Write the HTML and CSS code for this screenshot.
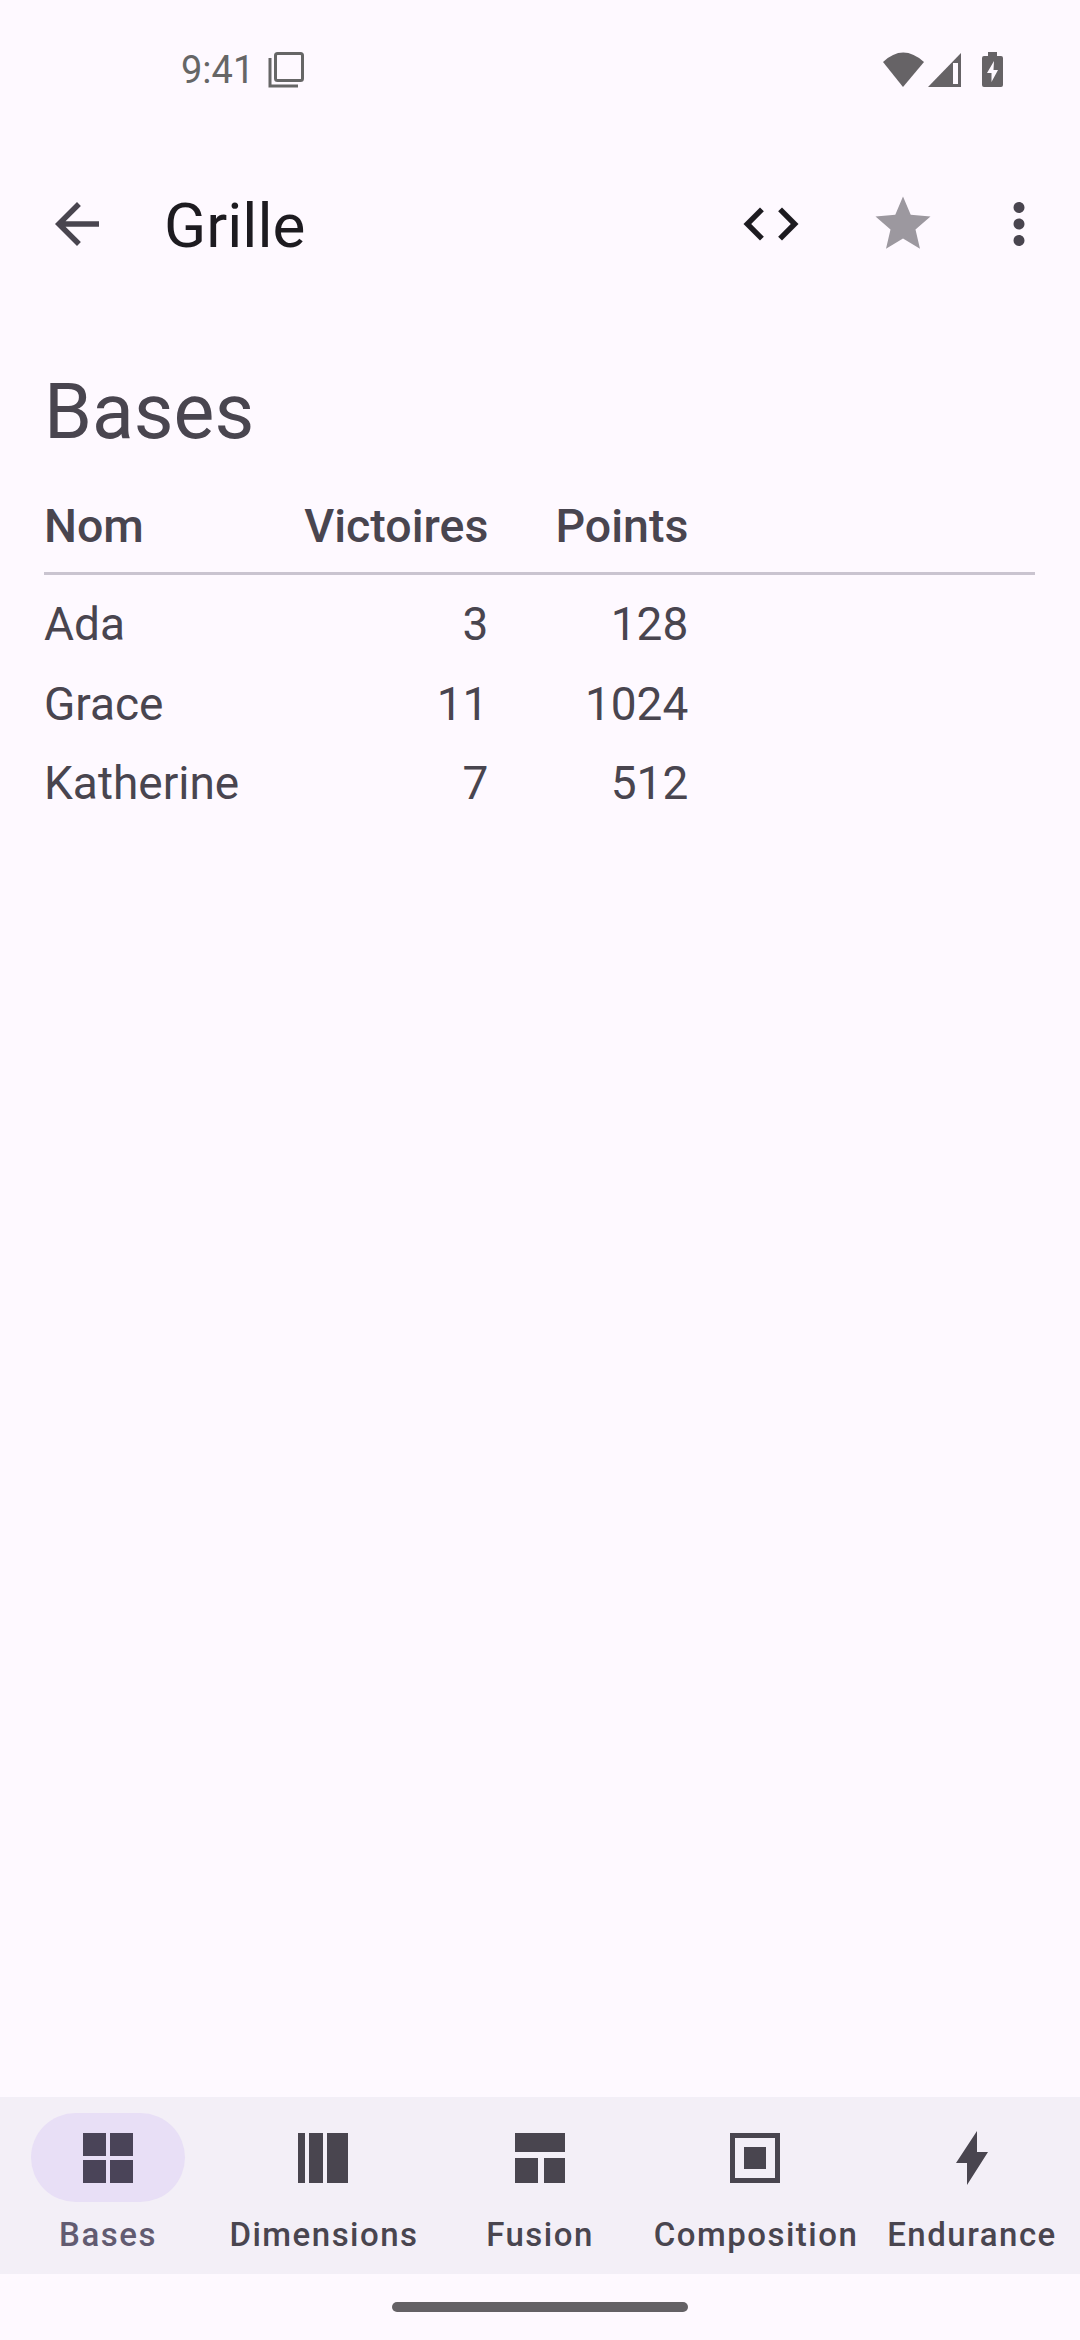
FILE: index.html
```html
<!DOCTYPE html>
<html lang="fr">
<head>
    <title>Grille</title>
    <link rel="stylesheet" href="styles.css">
</head>
<body>
    <div class="status-bar">
        <span class="clock">9:41</span>
        <svg class="copy-icon" width="36" height="36" viewBox="0 0 36 36">
            <rect x="7.5" y="1.5" width="27" height="27" rx="2" fill="none" stroke="#666" stroke-width="3"/>
            <path d="M2 6V34H30" fill="none" stroke="#666" stroke-width="3"/>
        </svg>
        <div class="status-icons">
            <svg width="41" height="36" viewBox="0 0 41 36">
                <path d="M0 10Q20 -9 41 10L20 35Z" fill="#666366"/>
            </svg>
            <svg width="34" height="36" viewBox="0 0 34 36">
                <path d="M33 1V35H0Z" fill="#666366"/>
                <rect x="25" y="11" width="5" height="21" fill="#fef9ff"/>
            </svg>
            <svg width="21" height="36" viewBox="0 0 21 36">
                <path d="M6 0H15V4H19Q21 4 21 6V33Q21 35 19 35H2Q0 35 0 33V6Q0 4 2 4H6Z" fill="#666366"/>
                <path d="M12 9L5 21H9.500V30L16 18H11.500Z" fill="#fef9ff"/>
            </svg>
        </div>
    </div>

    <header class="app-bar">
        <svg class="icon back" viewBox="0 0 24 24" fill="#49454f">
            <path d="M20 11H7.830l5.590-5.590L12 4l-8 8 8 8 1.410-1.410L7.830 13H20v-2z"/>
        </svg>
        <h1 class="title">Grille</h1>
        <svg class="icon code" viewBox="0 0 24 24" fill="#1d1b20">
            <path d="M9.400 16.600L4.800 12l4.600-4.600L8 6l-6 6 6 6 1.400-1.400zm5.200 0l4.600-4.600-4.600-4.600L16 6l6 6-6 6-1.400-1.400z"/>
        </svg>
        <svg class="icon star" viewBox="0 0 24 24" fill="#9c989f">
            <path d="M12 17.270L18.180 21l-1.640-7.030L22 9.240l-7.190-.610L12 2 9.190 8.630 2 9.240l5.460 4.730L5.820 21z"/>
        </svg>
        <svg class="icon more" viewBox="0 0 24 24" fill="#49454f">
            <path d="M12 8c1.100 0 2-.9 2-2s-.9-2-2-2-2 .9-2 2 .9 2 2 2zm0 2c-1.100 0-2 .9-2 2s.9 2 2 2 2-.9 2-2-.9-2-2-2zm0 6c-1.100 0-2 .9-2 2s.9 2 2 2 2-.9 2-2-.9-2-2-2z"/>
        </svg>
    </header>

    <main class="content">
        <h2 class="heading">Bases</h2>
        <table class="scores">
            <thead>
                <tr>
                    <th class="name">Nom</th>
                    <th class="num">Victoires</th>
                    <th class="num">Points</th>
                    <th class="filler"></th>
                </tr>
            </thead>
            <tbody>
                <tr class="first-row">
                    <td class="name">Ada</td>
                    <td class="num">3</td>
                    <td class="num">128</td>
                    <td class="filler"></td>
                </tr>
                <tr>
                    <td class="name">Grace</td>
                    <td class="num">11</td>
                    <td class="num">1024</td>
                    <td class="filler"></td>
                </tr>
                <tr>
                    <td class="name">Katherine</td>
                    <td class="num">7</td>
                    <td class="num">512</td>
                    <td class="filler"></td>
                </tr>
            </tbody>
        </table>
    </main>

    <nav class="bottom-nav">
        <div class="nav-item active">
            <div class="nav-pill">
                <svg class="nav-icon" viewBox="0 0 66 66">
                    <rect x="8" y="8" width="23" height="23"/>
                    <rect x="35" y="8" width="23" height="23"/>
                    <rect x="8" y="35" width="23" height="23"/>
                    <rect x="35" y="35" width="23" height="23"/>
                </svg>
            </div>
            <span class="nav-label">Bases</span>
        </div>
        <div class="nav-item">
            <div class="nav-pill">
                <svg class="nav-icon" viewBox="0 0 66 66">
                    <rect x="7" y="8" width="7" height="50"/>
                    <rect x="18" y="8" width="14" height="50"/>
                    <rect x="36" y="8" width="21" height="50"/>
                </svg>
            </div>
            <span class="nav-label">Dimensions</span>
        </div>
        <div class="nav-item">
            <div class="nav-pill">
                <svg class="nav-icon" viewBox="0 0 66 66">
                    <rect x="8" y="8" width="50" height="19"/>
                    <rect x="8" y="33" width="23" height="25"/>
                    <rect x="37" y="33" width="21" height="25"/>
                </svg>
            </div>
            <span class="nav-label">Fusion</span>
        </div>
        <div class="nav-item">
            <div class="nav-pill">
                <svg class="nav-icon" viewBox="0 0 66 66">
                    <path fill-rule="evenodd" d="M7 8H57V58H7ZM12 13V53H52V13Z"/>
                    <rect x="21" y="22" width="22" height="22"/>
                </svg>
            </div>
            <span class="nav-label">Composition</span>
        </div>
        <div class="nav-item">
            <div class="nav-pill">
                <svg class="nav-icon" viewBox="0 0 66 66">
                    <path d="M38 6V27H49L28 60V38H17Z"/>
                </svg>
            </div>
            <span class="nav-label">Endurance</span>
        </div>
    </nav>

    <div class="gesture-area">
        <div class="gesture-bar"></div>
    </div>
</body>
</html>
```

FILE: styles.css
```css
* {
    box-sizing: border-box;
}

html, body {
    margin: 0;
    height: 100%;
}

body {
    display: flex;
    flex-direction: column;
    height: 2340px;
    background-color: #fef9ff;
    color: #49454f;
    font-family: Roboto, "Liberation Sans", sans-serif;
}

.status-bar {
    display: flex;
    align-items: center;
    height: 140px;
    padding: 0 77px 0 181px;
    color: #666;
}

.clock {
    font-size: 38px;
    line-height: 42px;
}

.copy-icon {
    margin-left: 14px;
}

.status-icons {
    display: flex;
    align-items: center;
    gap: 4px;
    margin-left: auto;
}

.status-icons svg:last-child {
    margin-left: 16px;
}

.app-bar {
    display: flex;
    align-items: center;
    height: 168px;
    padding-left: 44px;
}

.icon {
    flex: none;
    width: 66px;
    height: 66px;
}

.title {
    flex: 1;
    margin: 4px 0 0 54px;
    color: #1d1b20;
    font-size: 62px;
    font-weight: 400;
    line-height: 70px;
}

.star {
    margin-left: 66px;
}

.more {
    margin-left: 50px;
    margin-right: 28px;
}

.content {
    flex: 1;
    padding: 60px 45px 0 44px;
}

.heading {
    margin: 0 0 44px;
    font-size: 77px;
    font-weight: 400;
    line-height: 88px;
}

.scores {
    width: 100%;
    border-collapse: collapse;
    font-size: 46px;
}

.scores th {
    padding: 0 0 19px;
    border-bottom: 3px solid #cac4d0;
    font-size: 46.500px;
    font-weight: 500;
    line-height: 53px;
}

.scores td {
    padding: 0;
    line-height: 79.500px;
}

.first-row td {
    padding-top: 10px;
}

.name {
    text-align: left;
}

.num {
    padding-left: 65px !important;
    text-align: right;
}

.num + .num {
    padding-left: 67px !important;
}

.filler {
    width: 100%;
}

.bottom-nav {
    display: grid;
    grid-template-columns: repeat(5, 1fr);
    height: 177px;
    padding-top: 16px;
    background-color: #f3eff7;
}

.nav-item {
    display: flex;
    flex-direction: column;
    align-items: center;
    min-width: 0;
}

.nav-pill {
    display: flex;
    align-items: center;
    justify-content: center;
    width: 154px;
    height: 89px;
    border-radius: 45px;
}

.active .nav-pill {
    background-color: #e8dff6;
}

.nav-icon {
    width: 66px;
    height: 66px;
    fill: #49454f;
}

.active .nav-icon {
    fill: #4a4458;
}

.nav-label {
    margin-top: 13px;
    font-size: 33px;
    font-weight: 500;
    letter-spacing: 1.500px;
    line-height: 40px;
    white-space: nowrap;
}

.active .nav-label {
    color: #625b71;
}

.gesture-area {
    display: flex;
    justify-content: center;
    height: 66px;
    padding-top: 28px;
}

.gesture-bar {
    width: 296px;
    height: 10px;
    border-radius: 5px;
    background-color: #646165;
}
```
